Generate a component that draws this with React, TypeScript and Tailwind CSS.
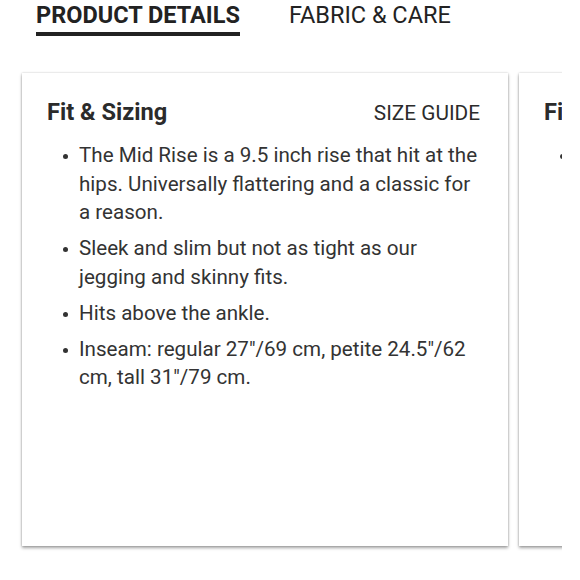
import React from 'react';

const items = [
    'The Mid Rise is a 9.5 inch rise that hit at the hips. Universally flattering and a classic for a reason.',
    'Sleek and slim but not as tight as our jegging and skinny fits.',
    'Hits above the ankle.',
    'Inseam: regular 27"/69 cm, petite 24.5"/62 cm, tall 31"/79 cm.',
];

const Card: React.FC<{title: string; guide?: boolean; list: string[]}> = ({title, guide, list}) => (
    <div className="w-[486px] h-[473px] shrink-0 bg-white shadow-[0_2px_3px_rgba(0,0,0,0.35),0_0_2px_rgba(0,0,0,0.2)] pl-[25px] pr-[26px] pt-[22px]">
        <div className="flex items-baseline justify-between">
            <h3 className="text-[23.6px] font-bold text-[#2b2b2b]">{title}</h3>
            {guide && <span className="text-[20.8px] text-[#2b2b2b] mr-[2px]">SIZE GUIDE</span>}
        </div>
        <ul className="mt-[11px] flex flex-col gap-[7.5px]">
            {list.map((t, i) => (
                <li key={i} className="flex text-[20.6px] leading-[28.5px] text-[#333]">
                    <span className="w-[32px] shrink-0 pl-[16px] pt-[13px]">
                        <span className="block w-[5px] h-[5px] rounded-full bg-[#333]"></span>
                    </span>
                    <span>{t}</span>
                </li>
            ))}
        </ul>
    </div>
);

export default function App() {
    return (
        <div className="w-[580px] h-[580px] bg-white font-['Roboto',sans-serif] overflow-hidden">
            <div className="flex gap-[49px] pl-[36px]">
                <div className="flex flex-col">
                    <span className="text-[23.5px] font-bold text-[#222] leading-[30px]">PRODUCT DETAILS</span>
                    <div className="h-[4px] bg-[#222] mt-[2px]"></div>
                </div>
                <span className="text-[23.5px] text-[#222] leading-[30px]">FABRIC &amp; CARE</span>
            </div>
            <div className="w-[562px] overflow-hidden">
                <div className="flex gap-[11px] pl-[22px] pt-[37px] pb-[10px]">
                    <Card title="Fit & Sizing" guide list={items}/>
                    <Card title="Fit & Sizing" list={items.slice(0, 1)}/>
                </div>
            </div>
        </div>
    );
}
